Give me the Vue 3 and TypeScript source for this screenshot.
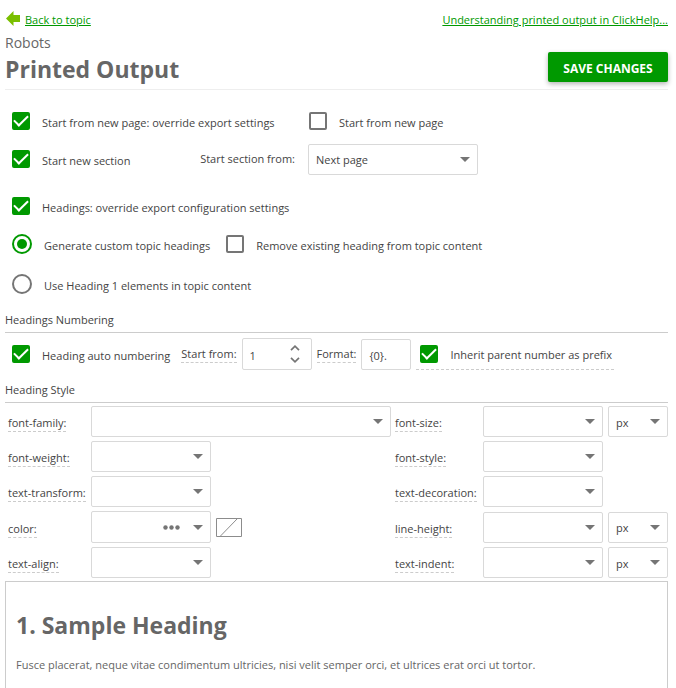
<script setup lang="ts">
import { reactive, ref } from 'vue'

interface StyleField {
  name: string
  wide?: boolean
  unit?: boolean
  color?: boolean
}

const styleRows: [StyleField, StyleField][] = [
  [{ name: 'font-family', wide: true }, { name: 'font-size', unit: true }],
  [{ name: 'font-weight' }, { name: 'font-style' }],
  [{ name: 'text-transform' }, { name: 'text-decoration' }],
  [{ name: 'color', color: true }, { name: 'line-height', unit: true }],
  [{ name: 'text-align' }, { name: 'text-indent', unit: true }],
]

const form = reactive({
  overridePage: true,
  newPage: false,
  newSection: true,
  sectionFrom: 'Next page',
  overrideHeadings: true,
  headingMode: 'custom',
  removeHeading: false,
  autoNumbering: true,
  startFrom: '1',
  format: '{0}.',
  inheritPrefix: true,
})

const colorValue = ref('')

function step(delta: number) {
  form.startFrom = String(Math.max(1, (parseInt(form.startFrom) || 1) + delta))
}
</script>

<template>
  <main class="page">
    <nav class="topbar">
      <a class="back" href="#topic">
        <svg class="back-icon" viewBox="0 0 14 15" aria-hidden="true">
          <path d="M0 7.5 7.5 0v4H14v7H7.5v4z" fill="#7abf00" />
        </svg>
        <span class="link-text">Back to topic</span>
      </a>
      <a class="link-text" href="#help">Understanding printed output in ClickHelp...</a>
    </nav>

    <header class="header">
      <div>
        <p class="project">Robots</p>
        <h1>Printed Output</h1>
      </div>
      <button class="save" type="button">SAVE CHANGES</button>
    </header>

    <section class="options">
      <div class="pair">
        <label class="check"><input v-model="form.overridePage" type="checkbox" /><span>Start from new page: override export settings</span></label>
        <label class="check second"><input v-model="form.newPage" type="checkbox" /><span>Start from new page</span></label>
      </div>
      <div class="pair">
        <div class="split">
          <label class="check"><input v-model="form.newSection" type="checkbox" /><span>Start new section</span></label>
          <label class="section-label" for="section-from">Start section from:</label>
        </div>
        <div class="select section-select">
          <select id="section-from" v-model="form.sectionFrom">
            <option>Next page</option>
            <option>Odd page</option>
            <option>Even page</option>
          </select>
          <svg class="arrow" viewBox="0 0 10 5" aria-hidden="true"><path d="M0 0h10L5 5z" /></svg>
        </div>
      </div>
    </section>

    <section class="modes">
      <div class="line">
        <label class="check"><input v-model="form.overrideHeadings" type="checkbox" /><span>Headings: override export configuration settings</span></label>
      </div>
      <div class="line">
        <label class="check"><input v-model="form.headingMode" type="radio" name="mode" value="custom" /><span>Generate custom topic headings</span></label>
        <label class="check inline"><input v-model="form.removeHeading" type="checkbox" /><span>Remove existing heading from topic content</span></label>
      </div>
      <div class="line last">
        <label class="check"><input v-model="form.headingMode" type="radio" name="mode" value="existing" /><span>Use Heading 1 elements in topic content</span></label>
      </div>
    </section>

    <h2>Headings Numbering</h2>
    <section class="numbering">
      <label class="check"><input v-model="form.autoNumbering" type="checkbox" /><span>Heading auto numbering</span></label>
      <label class="hint start" for="start-from">Start from:</label>
      <div class="spinner">
        <input id="start-from" v-model="form.startFrom" class="field" type="text" />
        <div class="steps">
          <button type="button" aria-label="Increase" @click="step(1)">
            <svg viewBox="0 0 10 6" aria-hidden="true"><path d="M1 5.2 5 1.2l4 4" /></svg>
          </button>
          <button type="button" aria-label="Decrease" @click="step(-1)">
            <svg viewBox="0 0 10 6" aria-hidden="true"><path d="M1 .8l4 4 4-4" /></svg>
          </button>
        </div>
      </div>
      <label class="hint" for="format">Format:</label>
      <input id="format" v-model="form.format" class="field format" type="text" />
      <label class="check inherit"><input v-model="form.inheritPrefix" type="checkbox" /><span>Inherit parent number as prefix</span></label>
    </section>

    <h2>Heading Style</h2>
    <section class="styles">
      <div v-for="row in styleRows" :key="row[0].name" class="style-row">
        <template v-for="(item, i) in row" :key="item.name">
          <div class="style-label" :class="{ right: i === 1 }">
            <label class="hint" :for="item.name">{{ item.name }}:</label>
          </div>
          <div class="style-control">
            <div v-if="item.color" class="select color">
              <input :id="item.name" v-model="colorValue" class="field" type="text" />
              <button class="dots" type="button" aria-label="More colors">
                <svg viewBox="0 0 17 5" aria-hidden="true">
                  <circle cx="2.5" cy="2.5" r="2.2" /><circle cx="8.5" cy="2.5" r="2.2" /><circle cx="14.5" cy="2.5" r="2.2" />
                </svg>
              </button>
              <svg class="arrow" viewBox="0 0 10 5" aria-hidden="true"><path d="M0 0h10L5 5z" /></svg>
            </div>
            <div v-else class="select" :class="{ wide: item.wide }">
              <select :id="item.name"><option></option></select>
              <svg class="arrow" viewBox="0 0 10 5" aria-hidden="true"><path d="M0 0h10L5 5z" /></svg>
            </div>
            <svg v-if="item.color" class="swatch" viewBox="0 0 26 19" aria-hidden="true">
              <path d="M.5.5h25v18H.5z" fill="#fff" />
              <path d="M4 18.5 21.5.5" />
            </svg>
            <div v-if="item.unit" class="select unit">
              <select :aria-label="item.name + ' unit'">
                <option>px</option>
                <option>pt</option>
                <option>em</option>
              </select>
              <svg class="arrow" viewBox="0 0 10 5" aria-hidden="true"><path d="M0 0h10L5 5z" /></svg>
            </div>
          </div>
        </template>
      </div>
    </section>

    <section class="preview">
      <p class="sample-heading">1. Sample Heading</p>
      <p class="sample-text">Fusce placerat, neque vitae condimentum ultricies, nisi velit semper orci, et ultrices erat orci ut tortor.</p>
    </section>
  </main>
</template>

<style>
body {
  margin: 0;
  background: #fff;
}
</style>

<style scoped>
.page {
  box-sizing: border-box;
  min-height: 100vh;
  padding: 10px 8px 0 5px;
  display: flex;
  flex-direction: column;
  font: 11px/16px "Open Sans", "Noto Sans", sans-serif;
  color: #444;
}

.page * {
  box-sizing: border-box;
}

p,
h1,
h2 {
  margin: 0;
}

input,
select,
button {
  margin: 0;
  font: inherit;
  color: inherit;
}

.topbar {
  display: flex;
  justify-content: space-between;
  align-items: center;
  height: 20px;
}

.topbar a {
  color: #090;
}

.link-text {
  text-decoration: underline;
}

.back {
  display: flex;
  align-items: center;
  gap: 5px;
  text-decoration: none;
}

.back-icon {
  width: 14px;
  height: 15px;
  margin: 0 0 3px 1px;
}

.header {
  display: flex;
  justify-content: space-between;
  align-items: flex-end;
  padding: 4px 0 3px;
  border-bottom: 1px solid #eee;
  color: #666;
}

.project {
  font-size: 14px;
  line-height: 18px;
}

h1 {
  font-size: 23px;
  line-height: 34px;
  font-weight: 700;
}

.save {
  width: 120px;
  height: 30px;
  margin-bottom: 4px;
  padding: 3px 0 0;
  border: 0;
  border-radius: 2px;
  background: #090;
  box-shadow: 0 2px 5px rgba(0, 0, 0, 0.3);
  color: #fff;
  font-size: 12px;
  font-weight: 700;
}

.options {
  padding-top: 12px;
}

.pair {
  display: grid;
  grid-template-columns: 303px minmax(0, 1fr);
  align-items: center;
  height: 38px;
}

.split {
  display: flex;
  justify-content: space-between;
  align-items: center;
}

.section-label {
  padding-right: 13px;
}

.check {
  display: flex;
  align-items: center;
  gap: 12px;
  padding-left: 7px;
}

.check span {
  padding-top: 3px;
  white-space: nowrap;
}

.check.second {
  padding-left: 1px;
}

.check.inline {
  padding-left: 16px;
}

input[type='checkbox'],
input[type='radio'] {
  appearance: none;
  flex: none;
  display: grid;
  place-items: center;
  border: 2px solid #757575;
  background: #fff;
}

input[type='checkbox'] {
  width: 18px;
  height: 18px;
  border-radius: 2px;
}

input[type='checkbox']:checked {
  border-color: #090;
  background: #090;
}

input[type='checkbox']:checked::before {
  content: '';
  width: 12px;
  height: 6px;
  border: solid #fff;
  border-width: 0 0 2px 2px;
  transform: translateY(-2px) rotate(-45deg);
}

input[type='radio'] {
  width: 20px;
  height: 20px;
  border-radius: 50%;
}

input[type='radio']:checked {
  border-color: #090;
}

input[type='radio']:checked::before {
  content: '';
  width: 10px;
  height: 10px;
  border-radius: 50%;
  background: #090;
}

.modes {
  padding-top: 9px;
}

.line {
  display: flex;
  align-items: center;
  height: 38px;
}

.line.last {
  margin-top: 2px;
}

h2 {
  margin-top: 5px;
  border-bottom: 1px solid #ccc;
  font-size: 11px;
  line-height: 24px;
  font-weight: 400;
}

.hint {
  border-bottom: 1px dashed #ccc;
  white-space: nowrap;
}

.field,
select {
  appearance: none;
  width: 100%;
  height: 31px;
  padding: 2px 7px 0;
  border: 1px solid #d9d9d9;
  border-radius: 2px;
  background: #fff;
}

.select {
  display: grid;
  align-items: center;
  width: 120px;
}

.select > * {
  grid-area: 1 / 1;
}

.select.wide {
  width: 100%;
}

.select.unit {
  width: 60px;
}

.section-select {
  width: 170px;
}

.arrow {
  width: 10px;
  height: 5px;
  margin-right: 8px;
  justify-self: end;
  fill: #757575;
  pointer-events: none;
}

.numbering {
  display: flex;
  align-items: center;
  gap: 5px;
  padding: 5px 0 3px;
}

.start {
  margin-left: 6px;
}

.spinner {
  display: grid;
  width: 70px;
}

.spinner > * {
  grid-area: 1 / 1;
}

.spinner .field {
  height: 32px;
}

.steps {
  display: grid;
  justify-self: end;
  align-self: center;
  gap: 2px;
  margin-right: 12px;
}

.steps button {
  display: grid;
  place-items: center;
  width: 10px;
  height: 10px;
  padding: 0;
  border: 0;
  background: none;
}

.steps svg {
  width: 10px;
  height: 6px;
  fill: none;
  stroke: #757575;
  stroke-width: 1.7;
}

.format {
  width: 50px;
}

.check.inherit {
  height: 32px;
  padding: 0 2px 0 4px;
  border-bottom: 1px dashed #ccc;
}

.styles {
  display: grid;
  gap: 4px;
  padding: 3px 0;
}

.style-row {
  display: grid;
  grid-template-columns: 83px minmax(0, 1fr) 92px 185px;
  align-items: center;
  padding-left: 3px;
}

.style-label {
  display: flex;
  padding-top: 4px;
}

.style-label.right {
  padding-left: 4px;
}

.style-control {
  display: flex;
  align-items: center;
  gap: 5px;
}

.color .field {
  height: 32px;
}

.dots {
  justify-self: end;
  width: 17px;
  height: 5px;
  margin-right: 31px;
  padding: 0;
  border: 0;
  background: none;
}

.dots svg {
  display: block;
  width: 17px;
  height: 5px;
  fill: #757575;
}

.swatch {
  width: 26px;
  height: 19px;
  stroke: #8c8c8c;
  stroke-width: 1;
}

.preview {
  flex: 1;
  padding: 26px 10px 0;
  border: 1px solid #ccc;
  border-bottom: 0;
  color: #666;
}

.sample-heading {
  font-size: 23px;
  line-height: 34px;
  font-weight: 700;
}

.sample-text {
  margin-top: 15px;
}
</style>
